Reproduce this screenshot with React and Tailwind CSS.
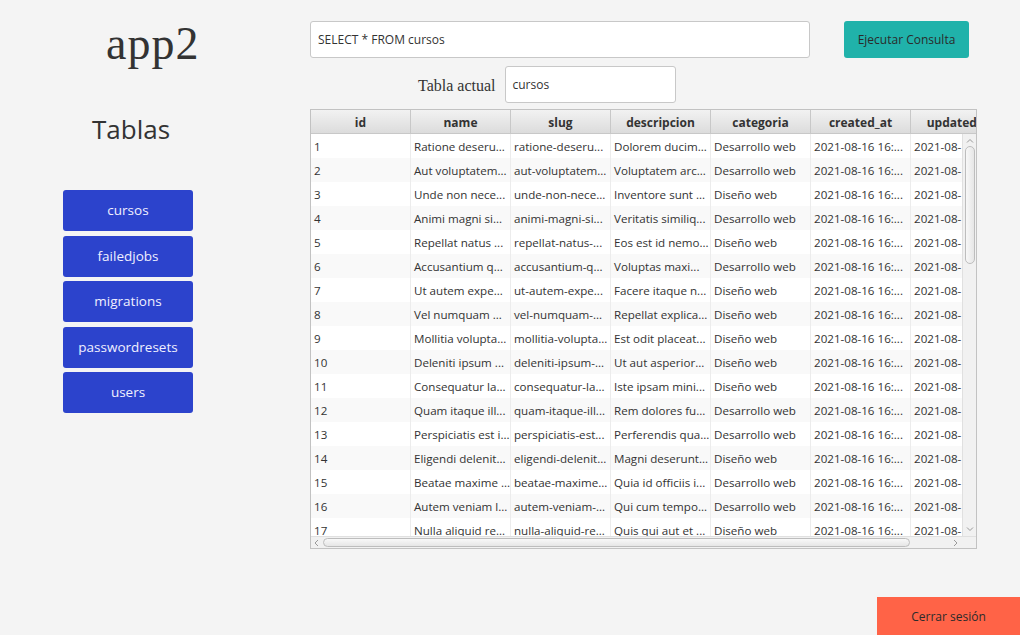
import React from 'react';

const tablas = ['cursos', 'failedjobs', 'migrations', 'passwordresets', 'users'];

const columnas = ['id', 'name', 'slug', 'descripcion', 'categoria', 'created_at', 'updated_at'];

// filas tal como las muestra la tabla (texto ya recortado)
const filas = [
  ['1', 'Ratione deseru...', 'ratione-deseru...', 'Dolorem ducim...', 'Desarrollo web'],
  ['2', 'Aut voluptatem...', 'aut-voluptatem...', 'Voluptatem arc...', 'Desarrollo web'],
  ['3', 'Unde non nece...', 'unde-non-nece...', 'Inventore sunt ...', 'Diseño web'],
  ['4', 'Animi magni si...', 'animi-magni-si...', 'Veritatis similiq...', 'Desarrollo web'],
  ['5', 'Repellat natus ...', 'repellat-natus-...', 'Eos est id nemo...', 'Diseño web'],
  ['6', 'Accusantium q...', 'accusantium-q...', 'Voluptas maxi...', 'Desarrollo web'],
  ['7', 'Ut autem expe...', 'ut-autem-expe...', 'Facere itaque n...', 'Diseño web'],
  ['8', 'Vel numquam ...', 'vel-numquam-...', 'Repellat explica...', 'Diseño web'],
  ['9', 'Mollitia volupta...', 'mollitia-volupta...', 'Est odit placeat...', 'Diseño web'],
  ['10', 'Deleniti ipsum ...', 'deleniti-ipsum-...', 'Ut aut asperior...', 'Diseño web'],
  ['11', 'Consequatur la...', 'consequatur-la...', 'Iste ipsam mini...', 'Diseño web'],
  ['12', 'Quam itaque ill...', 'quam-itaque-ill...', 'Rem dolores fu...', 'Desarrollo web'],
  ['13', 'Perspiciatis est i...', 'perspiciatis-est...', 'Perferendis qua...', 'Desarrollo web'],
  ['14', 'Eligendi delenit...', 'eligendi-delenit...', 'Magni deserunt...', 'Diseño web'],
  ['15', 'Beatae maxime ...', 'beatae-maxime...', 'Quia id officiis i...', 'Desarrollo web'],
  ['16', 'Autem veniam l...', 'autem-veniam-...', 'Qui cum tempo...', 'Desarrollo web'],
  ['17', 'Nulla aliquid re...', 'nulla-aliquid-re...', 'Quis qui aut et ...', 'Diseño web'],
];

const sans = "font-['Open_Sans','Noto_Sans',sans-serif]";
const serif = "font-['Liberation_Serif',serif]";

const App = () => {
  return (
    <div className={`w-[1020px] h-[635px] bg-[#f4f4f4] flex overflow-hidden text-[#333] ${sans}`}>
      {/* barra lateral */}
      <div className="w-[310px] flex flex-col">
        <div className={`pl-[106px] pt-[20px] h-[70px] text-[46px] leading-[48px] tracking-[1px] text-[#333] ${serif}`}>app2</div>
        <div className="pl-[92px] mt-[42px] text-[26px] leading-[34px]">Tablas</div>
        <div className="pl-[63px] mt-[44px] flex flex-col gap-[4.5px]">
          {tablas.map(t => (
            <button
              key={t}
              className="w-[130px] h-[41px] rounded-[3px] bg-[#2c43cc] text-[#f0f0ff] text-[13.5px]"
            >
              {t}
            </button>
          ))}
        </div>
      </div>

      {/* zona principal */}
      <div className="flex-1 flex flex-col">
        <div className="flex items-center mt-[21px] gap-[34px]">
          <div className="w-[500px] h-[37px] bg-white border border-[#c8c8c8] rounded-[3px] flex items-center px-[7px] text-[12px]">
            SELECT * FROM cursos
          </div>
          <button className="w-[125px] h-[37px] rounded-[3px] bg-[#20b2aa] text-[12px] text-[#2b2b2b]">
            Ejecutar Consulta
          </button>
        </div>

        <div className="flex items-center mt-[8px] pl-[108px] gap-[9px]">
          <span className={`text-[16px] pt-[2px] ${serif}`}>Tabla actual</span>
          <div className="w-[171px] h-[37px] bg-white border border-[#c8c8c8] rounded-[3px] flex items-center px-[7px] text-[12px]">
            cursos
          </div>
        </div>

        {/* tabla */}
        <div className="mt-[6px] w-[667px] h-[440px] border border-[#c2c2c2] bg-white flex flex-col overflow-hidden">
          <div className="flex h-[24px] shrink-0 bg-gradient-to-b from-[#f2f2f2] to-[#dcdcdc] border-b border-[#c8c8c8]">
            {columnas.map(c => (
              <div
                key={c}
                className="w-[100px] shrink-0 border-r border-[#c8c8c8] flex items-center justify-center pt-[2px] text-[12px] font-bold whitespace-nowrap overflow-hidden"
              >
                {c}
              </div>
            ))}
          </div>
          <div className="flex-1 flex overflow-hidden">
            <div className="flex-1 overflow-hidden">
              {filas.map((f, i) => (
                <div key={f[0]} className={`flex h-[24px] ${i % 2 ? 'bg-[#f9f9f9]' : 'bg-white'}`}>
                  {[...f, '2021-08-16 16:...', '2021-08-16 16:...'].map((v, j) => (
                    <div
                      key={j}
                      className="w-[100px] shrink-0 border-r border-[#ececec] flex items-center px-[3px] pt-[1px] text-[11.6px] whitespace-nowrap overflow-hidden"
                    >
                      {v}
                    </div>
                  ))}
                </div>
              ))}
            </div>
            {/* barra vertical */}
            <div className="w-[14px] shrink-0 bg-[#f1f1f1] border-l border-[#e0e0e0] flex flex-col items-center">
              <svg width="10" height="8" viewBox="0 0 10 8" className="mt-[3px]">
                <path d="M2 5.5 L5 2.5 L8 5.5" fill="none" stroke="#9a9a9a" strokeWidth="1" />
              </svg>
              <div className="w-[10px] h-[118px] mt-[1px] rounded-[5px] bg-gradient-to-r from-[#f8f8f8] to-[#e6e6e6] border border-[#bdbdbd]" />
              <div className="flex-1" />
              <svg width="10" height="8" viewBox="0 0 10 8" className="mb-[3px]">
                <path d="M2 2.5 L5 5.5 L8 2.5" fill="none" stroke="#9a9a9a" strokeWidth="1" />
              </svg>
            </div>
          </div>
          {/* barra horizontal */}
          <div className="h-[12px] shrink-0 bg-[#f1f1f1] border-t border-[#e0e0e0] flex items-center">
            <svg width="10" height="10" viewBox="0 0 10 10" className="ml-[1px]">
              <path d="M6 2 L3 5 L6 8" fill="none" stroke="#9a9a9a" strokeWidth="1" />
            </svg>
            <div className="w-[587px] h-[9px] ml-[1px] rounded-[5px] bg-gradient-to-b from-[#f8f8f8] to-[#e6e6e6] border border-[#bdbdbd]" />
            <div className="flex-1" />
            <svg width="10" height="10" viewBox="0 0 10 10" className="mr-[16px]">
              <path d="M4 2 L7 5 L4 8" fill="none" stroke="#9a9a9a" strokeWidth="1" />
            </svg>
          </div>
        </div>

        <div className="flex-1" />
        <div className="flex justify-end">
          <button className="w-[143px] h-[38px] pt-[2px] bg-[#ff6347] text-[12px] text-[#2b2b2b]">
            Cerrar sesión
          </button>
        </div>
      </div>
    </div>
  );
};

export default App;
